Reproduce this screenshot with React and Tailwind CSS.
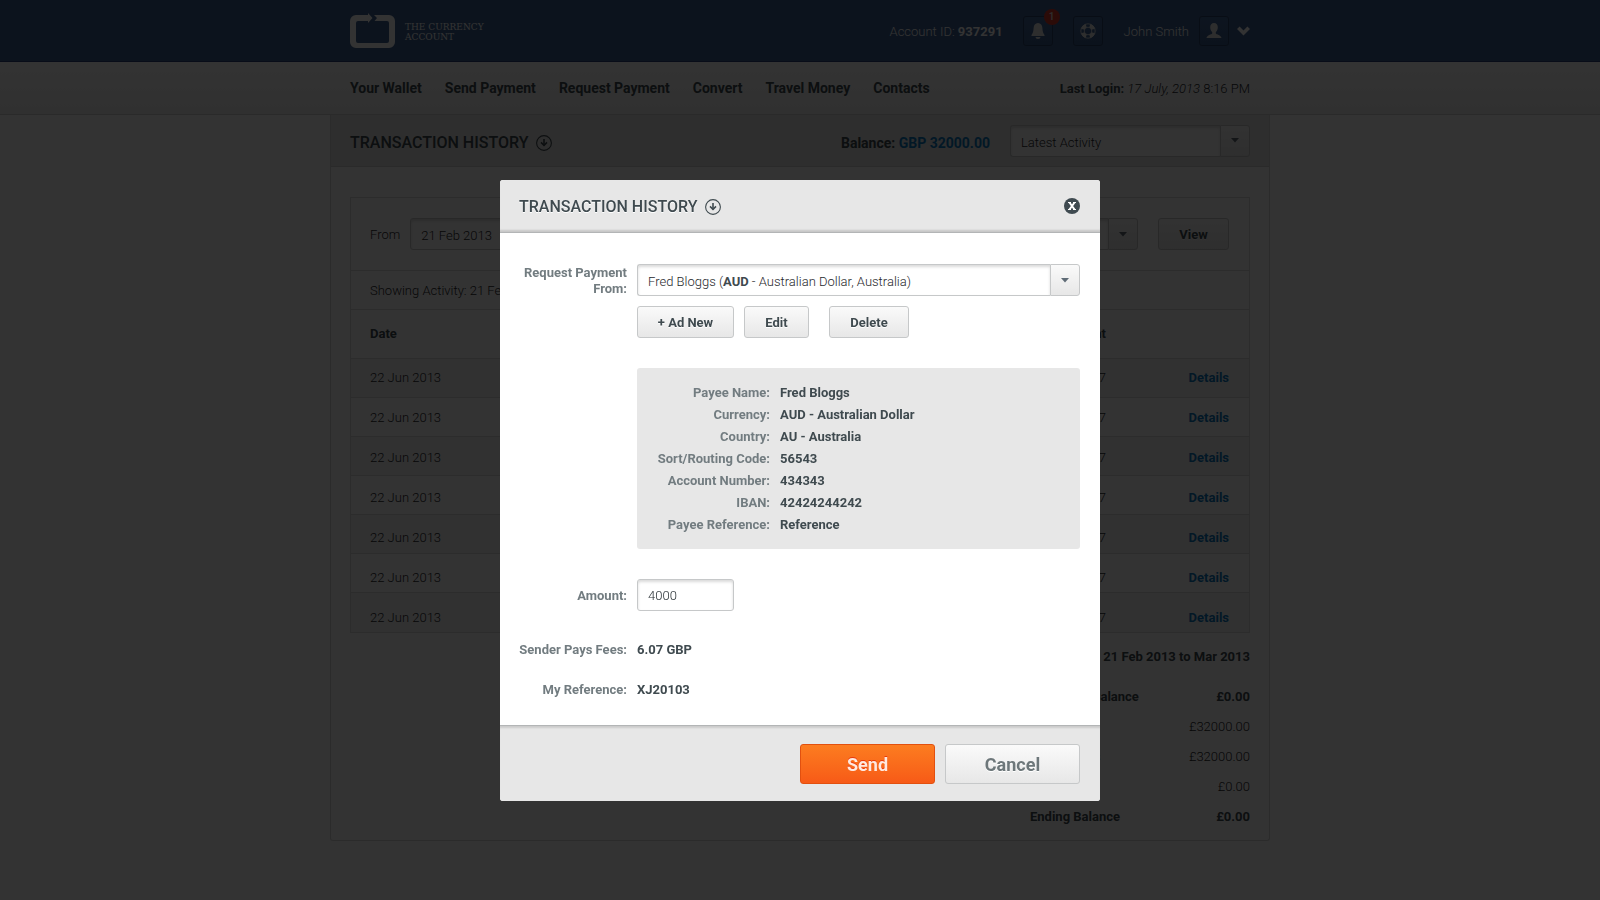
import React from "react";

const navItems = ["Your Wallet", "Send Payment", "Request Payment", "Convert", "Travel Money", "Contacts"];

const transactions = Array.from({ length: 7 }, (_, id) => ({
  id,
  date: "22 Jun 2013",
  description: "Payment to Fred Bloggs",
  amount: "32.67",
}));

const summary = [
  { label: "Beginning Balance", value: "£0.00", strong: true },
  { label: "Deposits", value: "£32000.00" },
  { label: "Withdrawals", value: "£32000.00" },
  { label: "Fees", value: "£0.00" },
  { label: "Ending Balance", value: "£0.00", strong: true, indent: true },
];

const payee = [
  ["Payee Name:", "Fred Bloggs"],
  ["Currency:", "AUD - Australian Dollar"],
  ["Country:", "AU - Australia"],
  ["Sort/Routing Code:", "56543"],
  ["Account Number:", "434343"],
  ["IBAN:", "42424244242"],
  ["Payee Reference:", "Reference"],
];

const lightButton =
  "rounded-[3px] border border-[#c6c8c9] bg-linear-to-b from-[#fafafa] to-[#e7e7e7] font-bold [text-shadow:0_1px_0_#fff]";
const fieldBox = "rounded-[3px] border border-[#c6c8c9] bg-white shadow-[inset_0_2px_3px_rgba(0,0,0,0.15)]";

function CircleArrow() {
  return (
    <svg width="16" height="16" viewBox="0 0 16 16" fill="none" stroke="currentColor" aria-hidden="true">
      <circle cx="8" cy="8" r="7.4" strokeWidth="1.1" />
      <path d="M8 4v6.5" strokeWidth="1.6" />
      <path d="M5 7.400 8 10.400l3-3" strokeWidth="1.5" />
    </svg>
  );
}

function Caret() {
  return (
    <svg width="8" height="5" viewBox="0 0 8 5" fill="currentColor" aria-hidden="true">
      <path d="M0 0h8L4 4.6z" />
    </svg>
  );
}

function Dropdown({ id, label, className, display, children }) {
  return (
    <div className={"relative flex h-8 " + className}>
      <div className={"flex flex-1 items-center rounded-r-none border-r-0 px-2.5 pt-1 font-light text-[#1f282c] " + fieldBox}>
        <span aria-hidden="true">{display}</span>
      </div>
      <div className={"flex w-[30px] items-center justify-center rounded-l-none text-[#5f6b76] " + lightButton}>
        <Caret />
      </div>
      <select id={id} aria-label={label} className="absolute inset-0 w-full opacity-0">
        {children}
      </select>
    </div>
  );
}

function Logo() {
  return (
    <a href="#home" className="flex items-center gap-2.5">
      <svg width="45" height="35" viewBox="0 0 45 35" fill="#fff" aria-hidden="true">
        <path d="M6 2H18V0l4.5 5L18 10V8H8a2 2 0 0 0-2 2v18a2 2 0 0 0 2 2h29a2 2 0 0 0 2-2V10a2 2 0 0 0-2-2H24.500L27 5l-3-3h15a6 6 0 0 1 6 6v21a6 6 0 0 1-6 6H6a6 6 0 0 1-6-6V8a6 6 0 0 1 6-6z" />
      </svg>
      <span className="pt-0.5 font-['DejaVu_Serif',serif] text-[9px] leading-[10px] text-white">
        THE CURRENCY
        <br />
        ACCOUNT
      </span>
    </a>
  );
}

const iconButton =
  "flex size-[30px] items-center justify-center rounded-[3px] border border-[#2c4468] bg-linear-to-b from-[#44699d] to-[#3a5b8c] text-[#e6e6e6]";

function TopBar() {
  return (
    <header className="h-[62px] border-b border-[#2a3f78] bg-[#3c5f91]">
      <div className="mx-auto flex h-full max-w-[900px] items-center justify-between">
        <Logo />
        <div className="flex items-center text-[13px] text-white">
          <span className="pt-0.5 font-light">
            Account ID: <b className="font-bold">937291</b>
          </span>
          <button type="button" aria-label="Notifications" className={"relative ml-5 " + iconButton}>
            <svg width="14" height="16" viewBox="0 0 14 16" fill="currentColor" aria-hidden="true">
              <path d="M7 0C4.200 0 2.800 2.200 2.600 5 2.400 8.500 2 10 .5 12v1h13v-1C12 10 11.600 8.500 11.400 5 11.200 2.200 9.800 0 7 0zM4.500 14a2.500 2 0 0 0 5 0z" />
            </svg>
            <span className="absolute -top-2 -right-2 flex size-4 items-center justify-center rounded-full bg-[#d8382c] text-[10px] font-medium">
              1
            </span>
          </button>
          <button type="button" aria-label="Help" className={"ml-5 " + iconButton}>
            <svg width="16" height="16" viewBox="0 0 16 16" fill="none" stroke="currentColor" aria-hidden="true">
              <circle cx="8" cy="8" r="7.200" strokeWidth="0.800" />
              <circle cx="8" cy="8" r="3.800" strokeWidth="0.800" />
              <circle
                cx="8"
                cy="8"
                r="5.500"
                strokeWidth="3.600"
                pathLength="8"
                strokeDasharray="1.200 0.800"
                strokeDashoffset="0.600"
                transform="rotate(45 8 8)"
              />
            </svg>
          </button>
          <span className="ml-[21px] pt-0.5 font-light">John Smith</span>
          <button type="button" aria-label="Profile" className={"ml-2.5 " + iconButton}>
            <svg width="16" height="16" viewBox="0 0 16 16" fill="currentColor" aria-hidden="true">
              <path d="M8 0C5.600 0 4.200 1.700 4.200 4.200c0 2 .8 3.800 2 4.800v1.500C5.500 11.600 1 12 .5 15h15C15 12 10.500 11.600 9.800 10.500V9c1.200-1 2-2.800 2-4.800C11.800 1.700 10.400 0 8 0z" />
            </svg>
          </button>
          <button type="button" aria-label="Account menu" className="ml-2">
            <svg width="13" height="10" viewBox="0 0 13 10" fill="none" stroke="currentColor" strokeWidth="3.600" aria-hidden="true">
              <path d="M1.300 1.800 6.500 7l5.200-5.200" />
            </svg>
          </button>
        </div>
      </div>
    </header>
  );
}

function NavBar() {
  return (
    <div className="h-[53px] border-b border-[#d0d0d0] bg-linear-to-b from-white to-[#efefef]">
      <div className="mx-auto flex h-full max-w-[900px] items-center justify-between">
        <nav className="flex gap-[23px] text-sm font-bold">
          {navItems.map((item) => (
            <a key={item} href="#nav">
              {item}
            </a>
          ))}
        </nav>
        <p className="pt-0.5 text-[13px] font-light text-[#1f282c]">
          <b className="font-bold text-[#3f4a4f]">Last Login:</b> <i>17 July, 2013</i> 8:16 PM
        </p>
      </div>
    </div>
  );
}

function HistoryPage() {
  return (
    <main className="mx-auto max-w-[940px] rounded-b-[3px] border border-t-0 border-[#d6d6d6] bg-white pb-2">
      <div className="flex h-[52px] items-center justify-between border-b border-[#d0d0d0] bg-[#e5e5e5] px-[19px]">
        <h1 className="flex items-center gap-2 pt-1 text-base font-medium">
          TRANSACTION HISTORY <CircleArrow />
        </h1>
        <div className="flex items-center gap-5">
          <p className="pt-1 text-sm font-bold">
            Balance: <span className="text-[#0b78be]">GBP 32000.00</span>
          </p>
          <Dropdown id="activity" label="Activity" className="w-60 text-[13px]" display="Latest Activity">
            <option>Latest Activity</option>
          </Dropdown>
        </div>
      </div>

      <div className="mx-[19px] mt-[30px] border border-[#d9d9d9]">
        <form className="flex h-[72px] items-center pr-5 pl-[19px]" onSubmit={(e) => e.preventDefault()}>
          <label htmlFor="from" className="pt-0.5 font-light text-[#1f282c]">
            From
          </label>
          <input id="from" defaultValue="21 Feb 2013" className={"ml-2.5 h-8 w-32 px-2.5 pt-0.5 font-light text-[#1f282c] " + fieldBox} />
          <div className="ml-auto flex gap-5">
            <Dropdown id="currency" label="Currency" className="w-60" display="GBP">
              <option>GBP</option>
            </Dropdown>
            <button type="submit" className={"h-8 w-[71px] pt-px " + lightButton}>
              View
            </button>
          </div>
        </form>
        <p className="flex h-[39px] items-center border-t border-[#d9d9d9] px-[19px] pt-0.5 font-light text-[#1f282c]">
          Showing Activity: 21 Feb 2013 to Mar 2013
        </p>
        <table className="w-full border-collapse text-left">
          <thead>
            <tr className="h-[49px] border-t border-[#d9d9d9]">
              <th className="w-40 pl-[19px] font-bold">Date</th>
              <th className="font-bold">Description</th>
              <th className="font-bold text-right">Amount</th>
              <th className="w-[143px]" aria-label="Details" />
            </tr>
          </thead>
          <tbody className="font-light text-[#1f282c]">
            {transactions.map((t, i) => {
              const pad = { paddingTop: 9 + i };
              return (
                <tr key={t.id} className="h-[39px] border-t border-[#d9d9d9] align-top leading-5 odd:bg-[#f5f5f5]">
                  <td className="pl-[19px]" style={pad}>
                    {t.date}
                  </td>
                  <td style={pad}>{t.description}</td>
                  <td className="text-right" style={pad}>
                    {t.amount}
                  </td>
                  <td className="pr-5 text-right" style={pad}>
                    <a href="#details" className="font-bold text-[#0b78be]">
                      Details
                    </a>
                  </td>
                </tr>
              );
            })}
          </tbody>
        </table>
      </div>

      <section className="mr-[19px] ml-auto w-[220px] pt-3.5">
        <h2 className="text-right font-bold leading-5 whitespace-nowrap">21 Feb 2013 to Mar 2013</h2>
        <dl className="mt-[15px]">
          {summary.map((row) => (
            <div
              key={row.label}
              className={
                "flex h-[30px] items-center justify-between " + (row.strong ? "font-bold" : "font-light text-[#1f282c]")
              }
            >
              <dt>{row.label}</dt>
              <dd>{row.value}</dd>
            </div>
          ))}
        </dl>
      </section>
    </main>
  );
}

function PaymentDialog() {
  const label = "w-[108px] shrink-0 text-right font-bold text-[#727c80]";
  return (
    <div
      role="dialog"
      aria-modal="true"
      aria-labelledby="dialog-title"
      className="w-full max-w-[600px] overflow-hidden rounded-[3px] bg-white"
    >
      <div className="flex h-[53px] items-center justify-between border-b border-[#b3b5b6] bg-[#e7e7e7] pr-5 pl-[19px] shadow-[inset_0_-3px_2px_-1px_rgba(0,0,0,0.14)]">
        <h2 id="dialog-title" className="flex items-center gap-2 pt-px text-base font-medium [text-shadow:0_1px_0_#fff]">
          TRANSACTION HISTORY <CircleArrow />
        </h2>
        <button type="button" aria-label="Close">
          <svg width="16" height="16" viewBox="0 0 16 16" fill="none" stroke="#fff" aria-hidden="true">
            <circle cx="8" cy="8" r="8" fill="#3f4a50" stroke="none" />
            <path d="M5.500 4.500l5 7M10.500 4.500l-5 7" strokeWidth="2" />
            <path d="M4 4.500h3M9 4.500h3M4 11.500h3M9 11.500h3" strokeWidth="1.200" />
          </svg>
        </button>
      </div>

      <form id="payment" className="pt-[31px] pr-5 pb-[25px] pl-[19px]" onSubmit={(e) => e.preventDefault()}>
        <div className="flex gap-2.5">
          <label htmlFor="payer" className={label + " pt-px leading-4"}>
            Request Payment From:
          </label>
          <div className="flex-1">
            <Dropdown
              id="payer"
              className="w-full"
              display={
                <>
                  Fred Bloggs (<b className="font-bold text-[#3f4a4f]">AUD</b> - Australian Dollar, Australia)
                </>
              }
            >
              <option>Fred Bloggs (AUD - Australian Dollar, Australia)</option>
            </Dropdown>
            <div className="mt-2.5 flex gap-2.5">
              <button type="button" className={"h-8 w-[97px] pt-px " + lightButton}>
                + Ad New
              </button>
              <button type="button" className={"mr-2.5 h-8 w-[65px] pt-px " + lightButton}>
                Edit
              </button>
              <button type="button" className={"h-8 w-20 pt-px " + lightButton}>
                Delete
              </button>
            </div>
            <dl className="mt-[30px] rounded-[3px] bg-[#e7e7e7] px-5 pt-3.5 pb-[13px] font-bold leading-[22px]">
              {payee.map(([name, value]) => (
                <div key={name} className="flex gap-2.5">
                  <dt className="w-[113px] text-right text-[#727c80]">{name}</dt>
                  <dd>{value}</dd>
                </div>
              ))}
            </dl>
          </div>
        </div>

        <div className="mt-[30px] flex items-center gap-2.5">
          <label htmlFor="amount" className={label + " pt-px"}>
            Amount:
          </label>
          <input id="amount" defaultValue="4000" className={"h-8 w-[97px] px-2.5 font-light text-[#1f282c] " + fieldBox} />
        </div>
        <dl className="mt-[29px] grid gap-5 leading-5 whitespace-nowrap">
          <div className="flex gap-2.5">
            <dt className={label}>Sender Pays Fees:</dt>
            <dd className="font-bold">6.07 GBP</dd>
          </div>
          <div className="flex gap-2.5">
            <dt className={label}>My Reference:</dt>
            <dd className="font-bold">XJ20103</dd>
          </div>
        </dl>
      </form>

      <div className="flex justify-end gap-2.5 border-t border-[#b3b5b6] bg-[#e7e7e7] px-5 pt-[18px] pb-[17px] shadow-[inset_0_3px_2px_-1px_rgba(0,0,0,0.12)]">
        <button
          type="submit"
          form="payment"
          className="h-10 w-[135px] rounded-[3px] border border-[#e2500f] bg-linear-to-b from-[#fc7c20] to-[#f75a17] pt-px text-lg font-bold text-[#ffe9e0] [text-shadow:0_-1px_0_#e8380c]"
        >
          Send
        </button>
        <button type="button" className={"h-10 w-[135px] pt-px text-lg text-[#6d777a] " + lightButton}>
          Cancel
        </button>
      </div>
    </div>
  );
}

export default function App() {
  return (
    <div className="min-h-screen bg-white font-[Roboto,sans-serif] text-[13px] text-[#3f4a4f]">
      <TopBar />
      <NavBar />
      <HistoryPage />
      <div className="fixed inset-0 flex items-start justify-center overflow-auto bg-black/80 pt-[180px]">
        <PaymentDialog />
      </div>
    </div>
  );
}
